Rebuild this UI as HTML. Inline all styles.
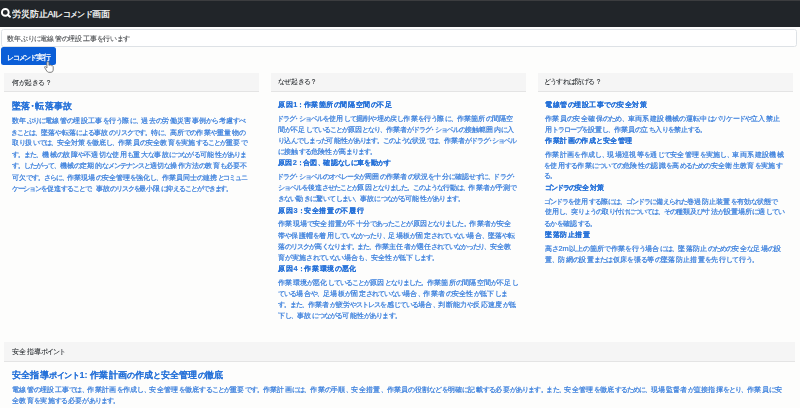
<!DOCTYPE html>
<html><head><meta charset="utf-8"><title>労災防止AIレコメンド画面</title>
<style>
html,body{margin:0;padding:0;background:#fdfdfc;width:800px;height:408px;overflow:hidden}
body{position:relative;font-family:"Liberation Sans",sans-serif}
#w{position:absolute;left:0;top:0;width:800px;height:408px;filter:blur(0.3px)}
.t{position:absolute;white-space:nowrap;height:48px;line-height:48px;transform:scale(0.25);transform-origin:0 0}
</style></head><body><div id="w">
<div style="position:absolute;left:0;top:0;width:800px;height:26.5px;background:#212529"></div>
<div style="position:absolute;left:0;top:0;width:800px;height:1px;background:#3c3d3f"></div>
<svg style="position:absolute;left:0;top:5px" width="15" height="15" viewBox="0 0 15 15"><circle cx="5.3" cy="7.4" r="3.4" fill="none" stroke="#fff" stroke-width="1.9"/><line x1="7.9" y1="10.0" x2="10.0" y2="11.7" stroke="#fff" stroke-width="2.1" stroke-linecap="round"/></svg>
<div style="position:absolute;left:1px;top:29.4px;width:796.3px;height:18px;box-sizing:border-box;border:1px solid #dee2e6;border-radius:2.5px;background:#fff"></div>
<div style="position:absolute;left:1.2px;top:47.3px;width:54.7px;height:17.9px;background:#0b5ed7;border-radius:2.5px"></div>
<div style="position:absolute;left:4px;top:72.8px;width:254.5px;height:19.1px;background:#f5f5f5;border-bottom:1px solid #e4e4e4;box-sizing:border-box"></div>
<div style="position:absolute;left:270.5px;top:72.8px;width:255.3px;height:19.1px;background:#f5f5f5;border-bottom:1px solid #e4e4e4;box-sizing:border-box"></div>
<div style="position:absolute;left:538px;top:72.8px;width:255.0px;height:19.1px;background:#f5f5f5;border-bottom:1px solid #e4e4e4;box-sizing:border-box"></div>
<div style="position:absolute;left:3.8px;top:342.3px;width:791.4px;height:19.4px;background:#f5f5f5;border-bottom:1px solid #e4e4e4;box-sizing:border-box"></div>
<div class="t" style="left:12.38px;top:7.70px;font-size:36.80px;color:#fff;letter-spacing:-1.493px;-webkit-text-stroke:1.00px currentColor">労災防止AI<span style="font-size:0.88em;letter-spacing:-3.701px">レコメンド</span>画面</div>
<div class="t" style="left:7.46px;top:32.26px;font-size:29.60px;color:#4a4d50;letter-spacing:-1.038px;-webkit-text-stroke:0.40px currentColor">数年<span style="font-size:0.98em;letter-spacing:-5.182px">ぶりに</span>電線管<span style="font-size:0.98em;letter-spacing:-5.182px">の</span>埋設工事<span style="font-size:0.98em;letter-spacing:-5.182px">を</span>行<span style="font-size:0.98em;letter-spacing:-5.182px">います</span></div>
<div class="t" style="left:6.76px;top:50.53px;font-size:30.40px;color:#fff;letter-spacing:-2.893px;-webkit-text-stroke:1.00px currentColor"><span style="font-size:0.88em;letter-spacing:-4.717px">レコメンド</span>実行</div>
<div class="t" style="left:12.00px;top:75.60px;font-size:29.60px;color:#212529;letter-spacing:-1.120px;-webkit-text-stroke:0.20px currentColor">何<span style="font-size:0.88em;letter-spacing:-2.896px">が</span>起<span style="font-size:0.88em;letter-spacing:-2.896px">きる？</span></div>
<div class="t" style="left:278.46px;top:75.24px;font-size:29.60px;color:#212529;letter-spacing:-0.224px;-webkit-text-stroke:0.20px currentColor"><span style="font-size:0.88em;letter-spacing:-2.000px">なぜ</span>起<span style="font-size:0.88em;letter-spacing:-2.000px">きる？</span></div>
<div class="t" style="left:544.45px;top:75.01px;font-size:29.60px;color:#212529;letter-spacing:-0.525px;-webkit-text-stroke:0.20px currentColor"><span style="font-size:0.88em;letter-spacing:-2.301px">どうすれば</span>防<span style="font-size:0.88em;letter-spacing:-2.301px">げる？</span></div>
<div class="t" style="left:12.00px;top:99.75px;font-size:36.80px;color:#2470d8;font-weight:bold;letter-spacing:0.513px;-webkit-text-stroke:0.48px currentColor">墜落<span style="margin-left:-0.27em;letter-spacing:0.513px;margin-right:-0.27em">・</span>転落事故</div>
<div class="t" style="left:12.00px;top:114.38px;font-size:29.60px;color:#3a7fdc;letter-spacing:-0.670px;-webkit-text-stroke:0.88px currentColor">数年<span style="font-size:0.88em;letter-spacing:-2.446px">ぶりに</span>電線管<span style="font-size:0.88em;letter-spacing:-2.446px">の</span>埋設工事<span style="font-size:0.88em;letter-spacing:-2.446px">を</span>行<span style="font-size:0.88em;letter-spacing:-2.446px">う</span>際<span style="font-size:0.88em;letter-spacing:-2.446px">に</span><span style="font-size:0.8em;letter-spacing:-0.670px">、</span>過去<span style="font-size:0.88em;letter-spacing:-2.446px">の</span>労働災害事例<span style="font-size:0.88em;letter-spacing:-2.446px">から</span>考慮<span style="font-size:0.88em;letter-spacing:-2.446px">すべ</span></div>
<div class="t" style="left:11.30px;top:125.67px;font-size:29.60px;color:#3a7fdc;letter-spacing:-1.000px;-webkit-text-stroke:0.88px currentColor"><span style="font-size:0.88em;letter-spacing:-2.776px">きことは</span><span style="font-size:0.8em;letter-spacing:-1.000px">、</span>墜落<span style="font-size:0.88em;letter-spacing:-2.776px">や</span>転落<span style="font-size:0.88em;letter-spacing:-2.776px">による</span>事故<span style="font-size:0.88em;letter-spacing:-2.776px">のリスクです</span><span style="font-size:0.8em;letter-spacing:-1.000px">。</span>特<span style="font-size:0.88em;letter-spacing:-2.776px">に</span><span style="font-size:0.8em;letter-spacing:-1.000px">、</span>高所<span style="font-size:0.88em;letter-spacing:-2.776px">での</span>作業<span style="font-size:0.88em;letter-spacing:-2.776px">や</span>重量物<span style="font-size:0.88em;letter-spacing:-2.776px">の</span></div>
<div class="t" style="left:12.00px;top:136.43px;font-size:29.60px;color:#3a7fdc;letter-spacing:-0.939px;-webkit-text-stroke:0.88px currentColor">取<span style="font-size:0.88em;letter-spacing:-2.715px">り</span>扱<span style="font-size:0.88em;letter-spacing:-2.715px">いでは</span><span style="font-size:0.8em;letter-spacing:-0.939px">、</span>安全対策<span style="font-size:0.88em;letter-spacing:-2.715px">を</span>徹底<span style="font-size:0.88em;letter-spacing:-2.715px">し</span><span style="font-size:0.8em;letter-spacing:-0.939px">、</span>作業員<span style="font-size:0.88em;letter-spacing:-2.715px">の</span>安全教育<span style="font-size:0.88em;letter-spacing:-2.715px">を</span>実施<span style="font-size:0.88em;letter-spacing:-2.715px">することが</span>重要<span style="font-size:0.88em;letter-spacing:-2.715px">で</span></div>
<div class="t" style="left:12.00px;top:147.96px;font-size:29.60px;color:#3a7fdc;letter-spacing:-0.535px;-webkit-text-stroke:0.88px currentColor"><span style="font-size:0.88em;letter-spacing:-2.311px">す</span><span style="font-size:0.8em;letter-spacing:-0.535px">。</span><span style="font-size:0.88em;letter-spacing:-2.311px">また</span><span style="font-size:0.8em;letter-spacing:-0.535px">、</span>機械<span style="font-size:0.88em;letter-spacing:-2.311px">の</span>故障<span style="font-size:0.88em;letter-spacing:-2.311px">や</span>不適切<span style="font-size:0.88em;letter-spacing:-2.311px">な</span>使用<span style="font-size:0.88em;letter-spacing:-2.311px">も</span>重大<span style="font-size:0.88em;letter-spacing:-2.311px">な</span>事故<span style="font-size:0.88em;letter-spacing:-2.311px">につながる</span>可能性<span style="font-size:0.88em;letter-spacing:-2.311px">がありま</span></div>
<div class="t" style="left:12.00px;top:159.08px;font-size:29.60px;color:#3a7fdc;letter-spacing:-1.120px;-webkit-text-stroke:0.88px currentColor"><span style="font-size:0.88em;letter-spacing:-2.896px">す</span><span style="font-size:0.8em;letter-spacing:-1.120px">。</span><span style="font-size:0.88em;letter-spacing:-2.896px">したがって</span><span style="font-size:0.8em;letter-spacing:-1.120px">、</span>機械<span style="font-size:0.88em;letter-spacing:-2.896px">の</span>定期的<span style="font-size:0.88em;letter-spacing:-2.896px">なメンテナンスと</span>適切<span style="font-size:0.88em;letter-spacing:-2.896px">な</span>操作方法<span style="font-size:0.88em;letter-spacing:-2.896px">の</span>教育<span style="font-size:0.88em;letter-spacing:-2.896px">も</span>必要不</div>
<div class="t" style="left:12.00px;top:171.03px;font-size:29.60px;color:#3a7fdc;letter-spacing:-1.520px;-webkit-text-stroke:0.88px currentColor">可欠<span style="font-size:0.88em;letter-spacing:-3.296px">です</span><span style="font-size:0.8em;letter-spacing:-1.520px">。</span><span style="font-size:0.88em;letter-spacing:-3.296px">さらに</span><span style="font-size:0.8em;letter-spacing:-1.520px">、</span>作業現場<span style="font-size:0.88em;letter-spacing:-3.296px">の</span>安全管理<span style="font-size:0.88em;letter-spacing:-3.296px">を</span>強化<span style="font-size:0.88em;letter-spacing:-3.296px">し</span><span style="font-size:0.8em;letter-spacing:-1.520px">、</span>作業員同士<span style="font-size:0.88em;letter-spacing:-3.296px">の</span>連携<span style="font-size:0.88em;letter-spacing:-3.296px">とコミュニ</span></div>
<div class="t" style="left:12.00px;top:181.58px;font-size:29.60px;color:#3a7fdc;letter-spacing:-1.768px;-webkit-text-stroke:0.88px currentColor"><span style="font-size:0.88em;letter-spacing:-3.544px">ケーションを</span>促進<span style="font-size:0.88em;letter-spacing:-3.544px">することで</span><span style="font-size:0.8em;letter-spacing:-1.768px">、</span>事故<span style="font-size:0.88em;letter-spacing:-3.544px">のリスクを</span>最小限<span style="font-size:0.88em;letter-spacing:-3.544px">に</span>抑<span style="font-size:0.88em;letter-spacing:-3.544px">えることができます</span><span style="font-size:0.8em;letter-spacing:-1.768px">。</span></div>
<div class="t" style="left:278.38px;top:97.50px;font-size:29.60px;color:#2470d8;font-weight:bold;letter-spacing:0.448px;-webkit-text-stroke:0.48px currentColor">原因1<span style="font-size:0.88em;letter-spacing:-1.328px">：</span>作業箇所<span style="font-size:0.88em;letter-spacing:-1.328px">の</span>間隔空間<span style="font-size:0.88em;letter-spacing:-1.328px">の</span>不足</div>
<div class="t" style="left:276.98px;top:111.61px;font-size:29.60px;color:#3a7fdc;letter-spacing:-0.832px;-webkit-text-stroke:0.88px currentColor"><span style="font-size:0.88em;letter-spacing:-2.608px">ドラグ</span><span style="margin-left:-0.27em;letter-spacing:-0.832px;margin-right:-0.27em">・</span><span style="font-size:0.88em;letter-spacing:-2.608px">ショベルを</span>使用<span style="font-size:0.88em;letter-spacing:-2.608px">して</span>掘削<span style="font-size:0.88em;letter-spacing:-2.608px">や</span>埋<span style="font-size:0.88em;letter-spacing:-2.608px">め</span>戻<span style="font-size:0.88em;letter-spacing:-2.608px">し</span>作業<span style="font-size:0.88em;letter-spacing:-2.608px">を</span>行<span style="font-size:0.88em;letter-spacing:-2.608px">う</span>際<span style="font-size:0.88em;letter-spacing:-2.608px">に</span><span style="font-size:0.8em;letter-spacing:-0.832px">、</span>作業箇所<span style="font-size:0.88em;letter-spacing:-2.608px">の</span>間隔空</div>
<div class="t" style="left:278.38px;top:122.65px;font-size:29.60px;color:#3a7fdc;letter-spacing:-1.190px;-webkit-text-stroke:0.88px currentColor">間<span style="font-size:0.88em;letter-spacing:-2.966px">が</span>不足<span style="font-size:0.88em;letter-spacing:-2.966px">していることが</span>原因<span style="font-size:0.88em;letter-spacing:-2.966px">となり</span><span style="font-size:0.8em;letter-spacing:-1.190px">、</span>作業者<span style="font-size:0.88em;letter-spacing:-2.966px">がドラグ</span><span style="margin-left:-0.27em;letter-spacing:-1.190px;margin-right:-0.27em">・</span><span style="font-size:0.88em;letter-spacing:-2.966px">ショベルの</span>接触範囲内<span style="font-size:0.88em;letter-spacing:-2.966px">に</span>入</div>
<div class="t" style="left:277.68px;top:134.11px;font-size:29.60px;color:#3a7fdc;letter-spacing:-1.614px;-webkit-text-stroke:0.88px currentColor"><span style="font-size:0.88em;letter-spacing:-3.390px">り</span>込<span style="font-size:0.88em;letter-spacing:-3.390px">んでしまった</span>可能性<span style="font-size:0.88em;letter-spacing:-3.390px">があります</span><span style="font-size:0.8em;letter-spacing:-1.614px">。</span><span style="font-size:0.88em;letter-spacing:-3.390px">このような</span>状況<span style="font-size:0.88em;letter-spacing:-3.390px">では</span><span style="font-size:0.8em;letter-spacing:-1.614px">、</span>作業者<span style="font-size:0.88em;letter-spacing:-3.390px">がドラグ</span><span style="margin-left:-0.27em;letter-spacing:-1.614px;margin-right:-0.27em">・</span><span style="font-size:0.88em;letter-spacing:-3.390px">ショベル</span></div>
<div class="t" style="left:278.38px;top:145.22px;font-size:29.60px;color:#3a7fdc;letter-spacing:-0.880px;-webkit-text-stroke:0.88px currentColor"><span style="font-size:0.88em;letter-spacing:-2.656px">に</span>接触<span style="font-size:0.88em;letter-spacing:-2.656px">する</span>危険性<span style="font-size:0.88em;letter-spacing:-2.656px">が</span>高<span style="font-size:0.88em;letter-spacing:-2.656px">まります</span><span style="font-size:0.8em;letter-spacing:-0.880px">。</span></div>
<div class="t" style="left:278.38px;top:156.34px;font-size:29.60px;color:#2470d8;font-weight:bold;letter-spacing:-0.403px;-webkit-text-stroke:0.48px currentColor">原因2<span style="font-size:0.88em;letter-spacing:-2.179px">：</span>合図<span style="font-size:0.8em;letter-spacing:-0.403px">、</span>確認<span style="font-size:0.88em;letter-spacing:-2.179px">なしに</span>車<span style="font-size:0.88em;letter-spacing:-2.179px">を</span>動<span style="font-size:0.88em;letter-spacing:-2.179px">かす</span></div>
<div class="t" style="left:276.98px;top:170.49px;font-size:29.60px;color:#3a7fdc;letter-spacing:-0.908px;-webkit-text-stroke:0.88px currentColor"><span style="font-size:0.88em;letter-spacing:-2.684px">ドラグ</span><span style="margin-left:-0.27em;letter-spacing:-0.908px;margin-right:-0.27em">・</span><span style="font-size:0.88em;letter-spacing:-2.684px">ショベルのオペレータが</span>周囲<span style="font-size:0.88em;letter-spacing:-2.684px">の</span>作業者<span style="font-size:0.88em;letter-spacing:-2.684px">の</span>状況<span style="font-size:0.88em;letter-spacing:-2.684px">を</span>十分<span style="font-size:0.88em;letter-spacing:-2.684px">に</span>確認<span style="font-size:0.88em;letter-spacing:-2.684px">せずに</span><span style="font-size:0.8em;letter-spacing:-0.908px">、</span><span style="font-size:0.88em;letter-spacing:-2.684px">ドラグ</span><span style="margin-left:-0.27em;letter-spacing:-0.908px;margin-right:-0.27em">・</span></div>
<div class="t" style="left:277.68px;top:181.00px;font-size:29.60px;color:#3a7fdc;letter-spacing:-1.506px;-webkit-text-stroke:0.88px currentColor"><span style="font-size:0.88em;letter-spacing:-3.282px">ショベルを</span>後進<span style="font-size:0.88em;letter-spacing:-3.282px">させたことが</span>原因<span style="font-size:0.88em;letter-spacing:-3.282px">となりました</span><span style="font-size:0.8em;letter-spacing:-1.506px">。</span><span style="font-size:0.88em;letter-spacing:-3.282px">このような</span>行動<span style="font-size:0.88em;letter-spacing:-3.282px">は</span><span style="font-size:0.8em;letter-spacing:-1.506px">、</span>作業者<span style="font-size:0.88em;letter-spacing:-3.282px">が</span>予測<span style="font-size:0.88em;letter-spacing:-3.282px">で</span></div>
<div class="t" style="left:277.68px;top:192.23px;font-size:29.60px;color:#3a7fdc;letter-spacing:-0.690px;-webkit-text-stroke:0.88px currentColor"><span style="font-size:0.88em;letter-spacing:-2.466px">きない</span>動<span style="font-size:0.88em;letter-spacing:-2.466px">きに</span>驚<span style="font-size:0.88em;letter-spacing:-2.466px">いてしまい</span><span style="font-size:0.8em;letter-spacing:-0.690px">、</span>事故<span style="font-size:0.88em;letter-spacing:-2.466px">につながる</span>可能性<span style="font-size:0.88em;letter-spacing:-2.466px">があります</span><span style="font-size:0.8em;letter-spacing:-0.690px">。</span></div>
<div class="t" style="left:278.38px;top:203.77px;font-size:29.60px;color:#2470d8;font-weight:bold;letter-spacing:0.865px;-webkit-text-stroke:0.48px currentColor">原因3<span style="font-size:0.88em;letter-spacing:-0.911px">：</span>安全措置<span style="font-size:0.88em;letter-spacing:-0.911px">の</span>不履行</div>
<div class="t" style="left:278.38px;top:217.15px;font-size:29.60px;color:#3a7fdc;letter-spacing:-0.939px;-webkit-text-stroke:0.88px currentColor">作業現場<span style="font-size:0.88em;letter-spacing:-2.715px">で</span>安全措置<span style="font-size:0.88em;letter-spacing:-2.715px">が</span>不十分<span style="font-size:0.88em;letter-spacing:-2.715px">であったことが</span>原因<span style="font-size:0.88em;letter-spacing:-2.715px">となりました</span><span style="font-size:0.8em;letter-spacing:-0.939px">。</span>作業者<span style="font-size:0.88em;letter-spacing:-2.715px">が</span>安全</div>
<div class="t" style="left:278.38px;top:228.76px;font-size:29.60px;color:#3a7fdc;letter-spacing:-0.872px;-webkit-text-stroke:0.88px currentColor">帯<span style="font-size:0.88em;letter-spacing:-2.648px">や</span>保護帽<span style="font-size:0.88em;letter-spacing:-2.648px">を</span>着用<span style="font-size:0.88em;letter-spacing:-2.648px">していなかったり</span><span style="font-size:0.8em;letter-spacing:-0.872px">、</span>足場板<span style="font-size:0.88em;letter-spacing:-2.648px">が</span>固定<span style="font-size:0.88em;letter-spacing:-2.648px">されていない</span>場合<span style="font-size:0.8em;letter-spacing:-0.872px">、</span>墜落<span style="font-size:0.88em;letter-spacing:-2.648px">や</span>転</div>
<div class="t" style="left:278.38px;top:239.79px;font-size:29.60px;color:#3a7fdc;letter-spacing:-1.431px;-webkit-text-stroke:0.88px currentColor">落<span style="font-size:0.88em;letter-spacing:-3.207px">のリスクが</span>高<span style="font-size:0.88em;letter-spacing:-3.207px">くなります</span><span style="font-size:0.8em;letter-spacing:-1.431px">。</span><span style="font-size:0.88em;letter-spacing:-3.207px">また</span><span style="font-size:0.8em;letter-spacing:-1.431px">、</span>作業主任者<span style="font-size:0.88em;letter-spacing:-3.207px">が</span>選任<span style="font-size:0.88em;letter-spacing:-3.207px">されていなかったり</span><span style="font-size:0.8em;letter-spacing:-1.431px">、</span>安全教</div>
<div class="t" style="left:278.38px;top:251.07px;font-size:29.60px;color:#3a7fdc;letter-spacing:-0.414px;-webkit-text-stroke:0.88px currentColor">育<span style="font-size:0.88em;letter-spacing:-2.190px">が</span>実施<span style="font-size:0.88em;letter-spacing:-2.190px">されていない</span>場合<span style="font-size:0.88em;letter-spacing:-2.190px">も</span><span style="font-size:0.8em;letter-spacing:-0.414px">、</span>安全性<span style="font-size:0.88em;letter-spacing:-2.190px">が</span>低下<span style="font-size:0.88em;letter-spacing:-2.190px">します</span><span style="font-size:0.8em;letter-spacing:-0.414px">。</span></div>
<div class="t" style="left:278.38px;top:262.12px;font-size:29.60px;color:#2470d8;font-weight:bold;letter-spacing:0.952px;-webkit-text-stroke:0.48px currentColor">原因4<span style="font-size:0.88em;letter-spacing:-0.824px">：</span>作業環境<span style="font-size:0.88em;letter-spacing:-0.824px">の</span>悪化</div>
<div class="t" style="left:278.38px;top:275.59px;font-size:29.60px;color:#3a7fdc;letter-spacing:-0.944px;-webkit-text-stroke:0.88px currentColor">作業環境<span style="font-size:0.88em;letter-spacing:-2.720px">が</span>悪化<span style="font-size:0.88em;letter-spacing:-2.720px">していることが</span>原因<span style="font-size:0.88em;letter-spacing:-2.720px">となりました</span><span style="font-size:0.8em;letter-spacing:-0.944px">。</span>作業箇所<span style="font-size:0.88em;letter-spacing:-2.720px">の</span>間隔空間<span style="font-size:0.88em;letter-spacing:-2.720px">が</span>不足<span style="font-size:0.88em;letter-spacing:-2.720px">し</span></div>
<div class="t" style="left:278.38px;top:287.48px;font-size:29.60px;color:#3a7fdc;letter-spacing:-0.619px;-webkit-text-stroke:0.88px currentColor"><span style="font-size:0.88em;letter-spacing:-2.395px">ている</span>場合<span style="font-size:0.88em;letter-spacing:-2.395px">や</span><span style="font-size:0.8em;letter-spacing:-0.619px">、</span>足場板<span style="font-size:0.88em;letter-spacing:-2.395px">が</span>固定<span style="font-size:0.88em;letter-spacing:-2.395px">されていない</span>場合<span style="font-size:0.8em;letter-spacing:-0.619px">、</span>作業者<span style="font-size:0.88em;letter-spacing:-2.395px">の</span>安全性<span style="font-size:0.88em;letter-spacing:-2.395px">が</span>低下<span style="font-size:0.88em;letter-spacing:-2.395px">しま</span></div>
<div class="t" style="left:278.38px;top:298.22px;font-size:29.60px;color:#3a7fdc;letter-spacing:-0.952px;-webkit-text-stroke:0.88px currentColor"><span style="font-size:0.88em;letter-spacing:-2.728px">す</span><span style="font-size:0.8em;letter-spacing:-0.952px">。</span><span style="font-size:0.88em;letter-spacing:-2.728px">また</span><span style="font-size:0.8em;letter-spacing:-0.952px">、</span>作業者<span style="font-size:0.88em;letter-spacing:-2.728px">が</span>疲労<span style="font-size:0.88em;letter-spacing:-2.728px">やストレスを</span>感<span style="font-size:0.88em;letter-spacing:-2.728px">じている</span>場合<span style="font-size:0.8em;letter-spacing:-0.952px">、</span>判断能力<span style="font-size:0.88em;letter-spacing:-2.728px">や</span>反応速度<span style="font-size:0.88em;letter-spacing:-2.728px">が</span>低</div>
<div class="t" style="left:278.38px;top:309.36px;font-size:29.60px;color:#3a7fdc;letter-spacing:-0.840px;-webkit-text-stroke:0.88px currentColor">下<span style="font-size:0.88em;letter-spacing:-2.616px">し</span><span style="font-size:0.8em;letter-spacing:-0.840px">、</span>事故<span style="font-size:0.88em;letter-spacing:-2.616px">につながる</span>可能性<span style="font-size:0.88em;letter-spacing:-2.616px">があります</span><span style="font-size:0.8em;letter-spacing:-0.840px">。</span></div>
<div class="t" style="left:545.15px;top:98.07px;font-size:29.60px;color:#2470d8;font-weight:bold;letter-spacing:0.302px;-webkit-text-stroke:0.48px currentColor">電線管<span style="font-size:0.88em;letter-spacing:-1.474px">の</span>埋設工事<span style="font-size:0.88em;letter-spacing:-1.474px">での</span>安全対策</div>
<div class="t" style="left:545.15px;top:111.74px;font-size:29.60px;color:#3a7fdc;letter-spacing:-0.399px;-webkit-text-stroke:0.88px currentColor">作業員<span style="font-size:0.88em;letter-spacing:-2.175px">の</span>安全確保<span style="font-size:0.88em;letter-spacing:-2.175px">のため</span><span style="font-size:0.8em;letter-spacing:-0.399px">、</span>車両系建設機械<span style="font-size:0.88em;letter-spacing:-2.175px">の</span>運転中<span style="font-size:0.88em;letter-spacing:-2.175px">はバリケードや</span>立入禁止</div>
<div class="t" style="left:545.15px;top:122.56px;font-size:29.60px;color:#3a7fdc;letter-spacing:-1.260px;-webkit-text-stroke:0.88px currentColor">用<span style="font-size:0.88em;letter-spacing:-3.036px">トラロープを</span>設置<span style="font-size:0.88em;letter-spacing:-3.036px">し</span><span style="font-size:0.8em;letter-spacing:-1.260px">、</span>作業員<span style="font-size:0.88em;letter-spacing:-3.036px">の</span>立<span style="font-size:0.88em;letter-spacing:-3.036px">ち</span>入<span style="font-size:0.88em;letter-spacing:-3.036px">りを</span>禁止<span style="font-size:0.88em;letter-spacing:-3.036px">する</span><span style="font-size:0.8em;letter-spacing:-1.260px">。</span></div>
<div class="t" style="left:545.15px;top:133.88px;font-size:29.60px;color:#2470d8;font-weight:bold;letter-spacing:0.102px;-webkit-text-stroke:0.48px currentColor">作業計画<span style="font-size:0.88em;letter-spacing:-1.674px">の</span>作成<span style="font-size:0.88em;letter-spacing:-1.674px">と</span>安全管理</div>
<div class="t" style="left:545.15px;top:147.77px;font-size:29.60px;color:#3a7fdc;letter-spacing:-0.552px;-webkit-text-stroke:0.88px currentColor">作業計画<span style="font-size:0.88em;letter-spacing:-2.328px">を</span>作成<span style="font-size:0.88em;letter-spacing:-2.328px">し</span><span style="font-size:0.8em;letter-spacing:-0.552px">、</span>現場巡視等<span style="font-size:0.88em;letter-spacing:-2.328px">を</span>通<span style="font-size:0.88em;letter-spacing:-2.328px">じて</span>安全管理<span style="font-size:0.88em;letter-spacing:-2.328px">を</span>実施<span style="font-size:0.88em;letter-spacing:-2.328px">し</span><span style="font-size:0.8em;letter-spacing:-0.552px">、</span>車両系建設機械</div>
<div class="t" style="left:544.45px;top:158.75px;font-size:29.60px;color:#3a7fdc;letter-spacing:-0.494px;-webkit-text-stroke:0.88px currentColor"><span style="font-size:0.88em;letter-spacing:-2.270px">を</span>使用<span style="font-size:0.88em;letter-spacing:-2.270px">する</span>作業<span style="font-size:0.88em;letter-spacing:-2.270px">についての</span>危険性<span style="font-size:0.88em;letter-spacing:-2.270px">の</span>認識<span style="font-size:0.88em;letter-spacing:-2.270px">を</span>高<span style="font-size:0.88em;letter-spacing:-2.270px">めるための</span>安全衛生教育<span style="font-size:0.88em;letter-spacing:-2.270px">を</span>実施<span style="font-size:0.88em;letter-spacing:-2.270px">す</span></div>
<div class="t" style="left:544.45px;top:169.11px;font-size:29.60px;color:#3a7fdc;letter-spacing:-0.800px;-webkit-text-stroke:0.88px currentColor"><span style="font-size:0.88em;letter-spacing:-2.576px">る</span><span style="font-size:0.8em;letter-spacing:-0.800px">。</span></div>
<div class="t" style="left:545.15px;top:180.97px;font-size:29.60px;color:#2470d8;font-weight:bold;letter-spacing:-1.155px;-webkit-text-stroke:0.48px currentColor"><span style="font-size:0.88em;letter-spacing:-2.931px">ゴンドラの</span>安全対策</div>
<div class="t" style="left:544.45px;top:194.72px;font-size:29.60px;color:#3a7fdc;letter-spacing:-1.104px;-webkit-text-stroke:0.88px currentColor"><span style="font-size:0.88em;letter-spacing:-2.880px">ゴンドラを</span>使用<span style="font-size:0.88em;letter-spacing:-2.880px">する</span>際<span style="font-size:0.88em;letter-spacing:-2.880px">には</span><span style="font-size:0.8em;letter-spacing:-1.104px">、</span><span style="font-size:0.88em;letter-spacing:-2.880px">ゴンドラに</span>備<span style="font-size:0.88em;letter-spacing:-2.880px">えられた</span>巻過防止装置<span style="font-size:0.88em;letter-spacing:-2.880px">を</span>有効<span style="font-size:0.88em;letter-spacing:-2.880px">な</span>状態<span style="font-size:0.88em;letter-spacing:-2.880px">で</span></div>
<div class="t" style="left:545.15px;top:205.49px;font-size:29.60px;color:#3a7fdc;letter-spacing:-1.307px;-webkit-text-stroke:0.88px currentColor">使用<span style="font-size:0.88em;letter-spacing:-3.083px">し</span><span style="font-size:0.8em;letter-spacing:-1.307px">、</span>突<span style="font-size:0.88em;letter-spacing:-3.083px">りょうの</span>取<span style="font-size:0.88em;letter-spacing:-3.083px">り</span>付<span style="font-size:0.88em;letter-spacing:-3.083px">けについては</span><span style="font-size:0.8em;letter-spacing:-1.307px">、</span><span style="font-size:0.88em;letter-spacing:-3.083px">その</span>種類及<span style="font-size:0.88em;letter-spacing:-3.083px">び</span>寸法<span style="font-size:0.88em;letter-spacing:-3.083px">が</span>設置場所<span style="font-size:0.88em;letter-spacing:-3.083px">に</span>適<span style="font-size:0.88em;letter-spacing:-3.083px">してい</span></div>
<div class="t" style="left:544.45px;top:217.27px;font-size:29.60px;color:#3a7fdc;letter-spacing:-0.200px;-webkit-text-stroke:0.88px currentColor"><span style="font-size:0.88em;letter-spacing:-1.976px">るかを</span>確認<span style="font-size:0.88em;letter-spacing:-1.976px">する</span><span style="font-size:0.8em;letter-spacing:-0.200px">。</span></div>
<div class="t" style="left:545.15px;top:227.98px;font-size:29.60px;color:#2470d8;font-weight:bold;letter-spacing:0.392px;-webkit-text-stroke:0.48px currentColor">墜落防止措置</div>
<div class="t" style="left:545.15px;top:241.59px;font-size:29.60px;color:#3a7fdc;letter-spacing:-0.461px;-webkit-text-stroke:0.88px currentColor">高<span style="font-size:0.88em;letter-spacing:-2.237px">さ</span>2m以上<span style="font-size:0.88em;letter-spacing:-2.237px">の</span>箇所<span style="font-size:0.88em;letter-spacing:-2.237px">で</span>作業<span style="font-size:0.88em;letter-spacing:-2.237px">を</span>行<span style="font-size:0.88em;letter-spacing:-2.237px">う</span>場合<span style="font-size:0.88em;letter-spacing:-2.237px">には</span><span style="font-size:0.8em;letter-spacing:-0.461px">、</span>墜落防止<span style="font-size:0.88em;letter-spacing:-2.237px">のための</span>安全<span style="font-size:0.88em;letter-spacing:-2.237px">な</span>足場<span style="font-size:0.88em;letter-spacing:-2.237px">の</span>設</div>
<div class="t" style="left:545.15px;top:253.12px;font-size:29.60px;color:#3a7fdc;letter-spacing:-0.439px;-webkit-text-stroke:0.88px currentColor">置<span style="font-size:0.8em;letter-spacing:-0.439px">、</span>防網<span style="font-size:0.88em;letter-spacing:-2.215px">の</span>設置<span style="font-size:0.88em;letter-spacing:-2.215px">または</span>仮床<span style="font-size:0.88em;letter-spacing:-2.215px">を</span>張<span style="font-size:0.88em;letter-spacing:-2.215px">る</span>等<span style="font-size:0.88em;letter-spacing:-2.215px">の</span>墜落防止措置<span style="font-size:0.88em;letter-spacing:-2.215px">を</span>先行<span style="font-size:0.88em;letter-spacing:-2.215px">して</span>行<span style="font-size:0.88em;letter-spacing:-2.215px">う</span><span style="font-size:0.8em;letter-spacing:-0.439px">。</span></div>
<div class="t" style="left:11.77px;top:345.09px;font-size:29.60px;color:#212529;letter-spacing:-0.880px;-webkit-text-stroke:0.20px currentColor">安全指導<span style="font-size:0.88em;letter-spacing:-2.656px">ポイント</span></div>
<div class="t" style="left:11.77px;top:368.56px;font-size:36.80px;color:#2470d8;font-weight:bold;letter-spacing:-0.146px;-webkit-text-stroke:0.48px currentColor">安全指導<span style="font-size:0.88em;letter-spacing:-2.354px">ポイント</span>1: 作業計画<span style="font-size:0.88em;letter-spacing:-2.354px">の</span>作成<span style="font-size:0.88em;letter-spacing:-2.354px">と</span>安全管理<span style="font-size:0.88em;letter-spacing:-2.354px">の</span>徹底</div>
<div class="t" style="left:11.77px;top:383.15px;font-size:29.60px;color:#3a7fdc;letter-spacing:-0.721px;-webkit-text-stroke:0.88px currentColor">電線管<span style="font-size:0.88em;letter-spacing:-2.497px">の</span>埋設工事<span style="font-size:0.88em;letter-spacing:-2.497px">では</span><span style="font-size:0.8em;letter-spacing:-0.721px">、</span>作業計画<span style="font-size:0.88em;letter-spacing:-2.497px">を</span>作成<span style="font-size:0.88em;letter-spacing:-2.497px">し</span><span style="font-size:0.8em;letter-spacing:-0.721px">、</span>安全管理<span style="font-size:0.88em;letter-spacing:-2.497px">を</span>徹底<span style="font-size:0.88em;letter-spacing:-2.497px">することが</span>重要<span style="font-size:0.88em;letter-spacing:-2.497px">です</span><span style="font-size:0.8em;letter-spacing:-0.721px">。</span>作業計画<span style="font-size:0.88em;letter-spacing:-2.497px">には</span><span style="font-size:0.8em;letter-spacing:-0.721px">、</span>作業<span style="font-size:0.88em;letter-spacing:-2.497px">の</span>手順<span style="font-size:0.8em;letter-spacing:-0.721px">、</span>安全措置<span style="font-size:0.8em;letter-spacing:-0.721px">、</span>作業員<span style="font-size:0.88em;letter-spacing:-2.497px">の</span>役割<span style="font-size:0.88em;letter-spacing:-2.497px">などを</span>明確<span style="font-size:0.88em;letter-spacing:-2.497px">に</span>記載<span style="font-size:0.88em;letter-spacing:-2.497px">する</span>必要<span style="font-size:0.88em;letter-spacing:-2.497px">があります</span><span style="font-size:0.8em;letter-spacing:-0.721px">。</span><span style="font-size:0.88em;letter-spacing:-2.497px">また</span><span style="font-size:0.8em;letter-spacing:-0.721px">、</span>安全管理<span style="font-size:0.88em;letter-spacing:-2.497px">を</span>徹底<span style="font-size:0.88em;letter-spacing:-2.497px">するために</span><span style="font-size:0.8em;letter-spacing:-0.721px">、</span>現場監督者<span style="font-size:0.88em;letter-spacing:-2.497px">が</span>直接指揮<span style="font-size:0.88em;letter-spacing:-2.497px">をとり</span><span style="font-size:0.8em;letter-spacing:-0.721px">、</span>作業員<span style="font-size:0.88em;letter-spacing:-2.497px">に</span>安</div>
<div class="t" style="left:11.77px;top:394.42px;font-size:29.60px;color:#3a7fdc;letter-spacing:-0.392px;-webkit-text-stroke:0.88px currentColor">全教育<span style="font-size:0.88em;letter-spacing:-2.168px">を</span>実施<span style="font-size:0.88em;letter-spacing:-2.168px">する</span>必要<span style="font-size:0.88em;letter-spacing:-2.168px">があります</span><span style="font-size:0.8em;letter-spacing:-0.392px">。</span></div>
<svg style="position:absolute;left:40px;top:56px" width="20" height="20" viewBox="0 0 20 20"><path d="M6.9 6.3Q7.9 4.9 8.9 6.3L8.9 9.2Q10.9 8.6 11.3 9.6Q12.9 9.2 13.2 10.6L13.2 14.2Q13 16.2 11 16.3L8.6 16.3Q7.5 16.1 6.8 15.1L4.6 11.5Q4.3 10.6 5.2 10.5L6.9 12Z" fill="#fff" stroke="#707070" stroke-width="0.9" stroke-linejoin="round"/></svg>
</div><script>
(function(){
var W=[391, 488, 171, 153, 154, 226, 243, 934, 935, 938, 938, 942, 941, 879, 458, 947, 944, 950, 393, 449, 952, 951, 743, 346, 935, 951, 934, 641, 316, 959, 915, 952, 490, 410, 942, 644, 352, 956, 952, 48, 236, 934, 954, 209, 182, 947, 852, 214, 847, 3082, 430];
var els=document.querySelectorAll('.t');
for(var i=0;i<els.length&&i<W.length;i++){
 var e=els[i],w=e.offsetWidth,n=e.textContent.length;
 if(n>0&&Math.abs(w-W[i])>3){
  var d=(W[i]-w)/n;
  e.style.letterSpacing=((parseFloat(e.style.letterSpacing)||0)+d)+'px';
  var sp=e.getElementsByTagName('span');
  for(var j=0;j<sp.length;j++){sp[j].style.letterSpacing=((parseFloat(sp[j].style.letterSpacing)||0)+d)+'px';}
 }
}
})();
</script></body></html>
